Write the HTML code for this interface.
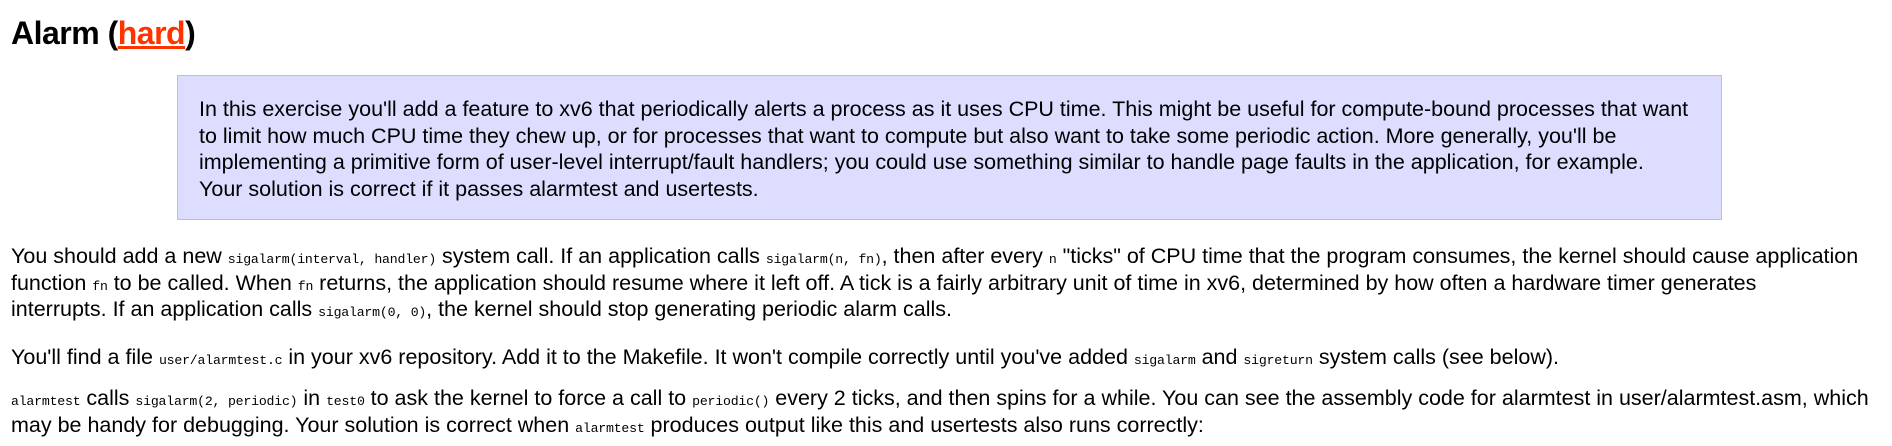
<!DOCTYPE html>
<html><head><meta charset="utf-8"><style>
body{margin:0;background:#fff;font-family:"Liberation Sans",sans-serif;color:#000;font-size:21.5px;}
h2{position:absolute;left:11px;top:13px;margin:0;font-size:32px;line-height:40px;font-weight:bold;letter-spacing:-0.5px}
h2 a{color:#ff3300;text-decoration:underline}
.box{position:absolute;left:177px;top:75px;width:1543px;height:143px;background:#ddddff;border:1px solid #bbbbee}
.box div{position:absolute;left:21px;top:20px;line-height:26.5px;white-space:nowrap}
.p{position:absolute;left:11px;line-height:26.5px;white-space:nowrap}
code{font-family:"Liberation Mono",monospace;font-size:13.2px;letter-spacing:-0.2px;line-height:1}
</style></head><body>
<h2>Alarm (<a>hard</a>)</h2>
<div class="box"><div>In this exercise you'll add a feature to xv6 that periodically alerts a process as it uses CPU time. This might be useful for compute-bound processes that want<br>to limit how much CPU time they chew up, or for processes that want to compute but also want to take some periodic action. More generally, you'll be<br>implementing a primitive form of user-level interrupt/fault handlers; you could use something similar to handle page faults in the application, for example.<br>Your solution is correct if it passes alarmtest and usertests.</div></div>
<div class="p" style="top:243px">You should add a new <code>sigalarm(interval, handler)</code> system call. If an application calls <code>sigalarm(n, fn)</code>, then after every <code>n</code> "ticks" of CPU time that the program consumes, the kernel should cause application<br>function <code>fn</code> to be called. When <code>fn</code> returns, the application should resume where it left off. A tick is a fairly arbitrary unit of time in xv6, determined by how often a hardware timer generates<br>interrupts. If an application calls <code>sigalarm(0, 0)</code>, the kernel should stop generating periodic alarm calls.</div>
<div class="p" style="top:344px">You'll find a file <code>user/alarmtest.c</code> in your xv6 repository. Add it to the Makefile. It won't compile correctly until you've added <code>sigalarm</code> and <code>sigreturn</code> system calls (see below).</div>
<div class="p" style="top:385px"><code>alarmtest</code> calls <code>sigalarm(2, periodic)</code> in <code>test0</code> to ask the kernel to force a call to <code>periodic()</code> every 2 ticks, and then spins for a while. You can see the assembly code for alarmtest in user/alarmtest.asm, which<br>may be handy for debugging. Your solution is correct when <code>alarmtest</code> produces output like this and usertests also runs correctly:</div>
</body></html>
